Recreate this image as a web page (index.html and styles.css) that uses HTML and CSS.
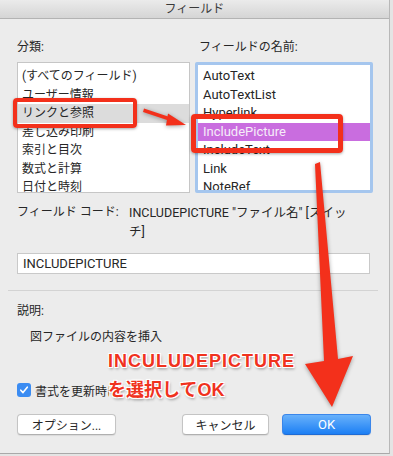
FILE: index.html
```html
<!DOCTYPE html>
<html lang="ja">
    <head>
        <meta charset="utf-8">
        <title>フィールド</title>
        <link rel="stylesheet" href="styles.css">
    </head>
    <body>
    <div class="dialog">
        <div class="titlebar">フィールド</div>
        <div class="body">
            <div class="pickers">
                <div class="picker">
                    <div class="label">分類:</div>
                    <ul class="list list-cat">
                        <li>(すべてのフィールド)</li>
                        <li>ユーザー情報</li>
                        <li class="current">リンクと参照</li>
                        <li>差し込み印刷</li>
                        <li>索引と目次</li>
                        <li>数式と計算</li>
                        <li>日付と時刻</li>
                    </ul>
                </div>
                <div class="picker">
                    <div class="label label-names">フィールドの名前:</div>
                    <ul class="list list-names">
                        <li>AutoText</li>
                        <li>AutoTextList</li>
                        <li>Hyperlink</li>
                        <li class="current">IncludePicture</li>
                        <li>IncludeText</li>
                        <li>Link</li>
                        <li>NoteRef</li>
                    </ul>
                </div>
            </div>

            <div class="code-row">
                <span class="code-label">フィールド コード:</span>
                <span class="code-value">INCLUDEPICTURE "ファイル名" [スイッ<br>チ]</span>
            </div>
            <div class="code-input">INCLUDEPICTURE</div>

            <div class="sep"></div>

            <div class="label">説明:</div>
            <p class="desc">図ファイルの内容を挿入</p>

            <div class="keep">
                <span class="check">
                    <svg width="10" height="10" viewBox="0 0 10 10"><path d="M1.8 5.2 L4 7.6 L8.3 2.2" fill="none" stroke="#fff" stroke-width="1.6" stroke-linecap="round" stroke-linejoin="round"/></svg>
                </span>
                <span class="keep-text">書式を更新時に変更を保持する</span>
            </div>

            <div class="buttons">
                <button class="btn btn-opt">オプション...</button>
                <div class="btn-group">
                    <button class="btn btn-cancel">キャンセル</button>
                    <button class="btn btn-ok">OK</button>
                </div>
            </div>
        </div>

        <!-- annotations -->
        <div class="mark mark-cat"></div>
        <div class="mark mark-name"></div>
        <svg class="arrows" width="389" height="453" viewBox="0 0 389 453">
            <path d="M144 108.5 L171 117.5 L170 121 L143 112 Z" fill="#f3301b"/>
            <path d="M186 125 L168 113.5 L166 125.5 Z" fill="#f3301b"/>
            <path d="M315 164 L320 162 L338 359 L353 356 L332 407 L305 364 L324 361 Z" fill="#f3301b"/>
        </svg>
        <div class="note">
            <div class="note-1">INCULUDEPICTURE</div>
            <div class="note-2">を選択してOK</div>
        </div>
    </div>
    </body>
</html>
```

FILE: styles.css
```css
*{padding:0; margin:0; list-style:none; box-sizing:border-box;}
body{background:#e4e4e4; font-family:Roboto, "Noto Sans CJK JP", sans-serif; color:#262626; font-size:12px;}

.dialog{width:390px; height:454px; background:#ececec; border-right:1px solid #b8b8b8; border-bottom:1px solid #a9a9a9; position:relative; overflow:hidden;}
.titlebar{height:19px; line-height:18px; text-align:center; font-size:12px; color:#3a3a3a; background:linear-gradient(#ebebeb, #d5d5d5); border-bottom:1px solid #b3b3b3;}
.body{padding:20px 16px 0 17px;}

.pickers{display:grid; grid-template-columns:173px 178px; column-gap:5px;}
.label{line-height:16px; font-size:12px;}
.label-names{padding-left:4px;}
.picker .label{margin-bottom:7px;}

.list{height:131px; background:#fff; overflow:hidden;}
.list li{line-height:18.5px; white-space:nowrap;}
.list-cat{border:1px solid #c6c6c6; padding-top:4px; font-size:12px;}
.list-cat li{padding-left:4px;}
.list-cat li.current{background:#dcdcdc;}
.list-names{border:3px solid #a5c6ee; border-radius:2px; padding-top:2px; font-size:13px;}
.list-names li{padding-left:5px;}
.list-names li.current{background:#c96ddf; color:#f6ecf9;}

.code-row{display:flex; margin-top:10px; line-height:19px;}
.code-label{width:112px; flex:none;}
.code-value{font-size:12.5px;}
.code-input{margin-top:12px; width:353px; height:21px; background:#fff; border:1px solid #c9c9c9; padding-left:5px; line-height:19px; font-size:13px;}

.sep{margin:16px -9px 0 -9px; border-top:1px solid #d3d3d3; width:370px;}
.sep + .label{margin-top:12px;}
.desc{margin-top:10px; padding-left:13px; line-height:16px;}

.keep{display:flex; align-items:center; margin-top:37px; height:16px;}
.check{width:14px; height:14px; border-radius:3px; background:#3b8cf2; display:flex; align-items:center; justify-content:center;}
.keep-text{margin-left:4px; width:74px; overflow:hidden; white-space:nowrap;}

.buttons{display:flex; justify-content:space-between; margin-top:16px; width:354px;}
.btn-group{display:flex; gap:13px;}
.btn{height:21px; border:1px solid #c4c4c4; border-bottom-color:#b0b0b0; border-radius:4px; background:#fff; font-family:Roboto, "Noto Sans CJK JP", sans-serif; font-size:12px; color:#262626; box-shadow:0 1px 1px rgba(0,0,0,0.08);}
.btn-opt{width:99px;}
.btn-cancel{width:87px;}
.btn-ok{width:89px; font-size:13px; color:#fff; background:linear-gradient(#68b1fb, #1c7ff4); border-color:#3a86ea; border-bottom-color:#1f6bd3;}

.mark{position:absolute; border:4px solid #f3301b; border-radius:4px; box-shadow:0 1px 3px rgba(0,0,0,0.35);}
.mark-cat{left:13px; top:98px; width:124px; height:30px;}
.mark-name{left:191px; top:114px; width:152px; height:39px; border-width:5px;}
.arrows{position:absolute; left:0; top:0; filter:drop-shadow(0 1px 2px rgba(0,0,0,0.35));}

.note{position:absolute; left:108px; top:347px; font-family:"Liberation Sans", "Noto Sans CJK JP", sans-serif; font-weight:bold; font-size:18px; line-height:29px; color:#f0321e; white-space:nowrap;
    text-shadow:1px 1px 0 #fff, -1px -1px 0 #fff, 1px -1px 0 #fff, -1px 1px 0 #fff, 0 0 3px #fff, 1px 2px 3px rgba(0,0,0,0.45);}
.note-1{letter-spacing:1px;}
```
